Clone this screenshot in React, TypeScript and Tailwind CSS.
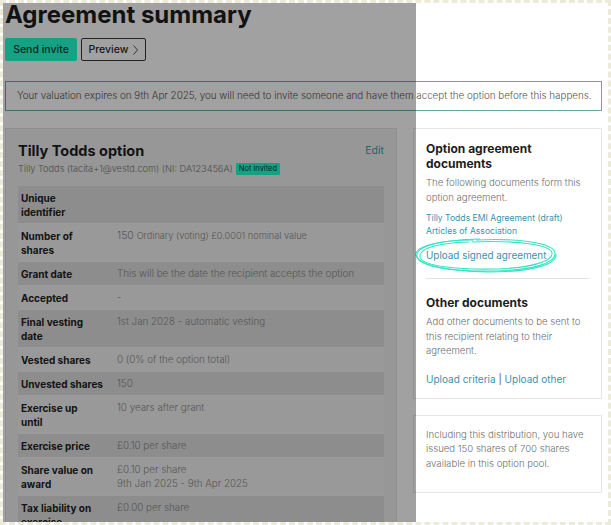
import React from "react";

const rows: { label: string[]; value: React.ReactNode; shaded: boolean }[] = [
  { label: ["Unique", "identifier"], value: "", shaded: true },
  {
    label: ["Number of", "shares"],
    value: (
      <>
        <span className="text-[10.5px]">150</span> <span className="text-[9.2px]">Ordinary (voting) £0.0001 nominal value</span>
      </>
    ),
    shaded: false,
  },
  { label: ["Grant date"], value: "This will be the date the recipient accepts the option", shaded: true },
  { label: ["Accepted"], value: "-", shaded: false },
  { label: ["Final vesting", "date"], value: "1st Jan 2028 - automatic vesting", shaded: true },
  { label: ["Vested shares"], value: "0 (0% of the option total)", shaded: false },
  { label: ["Unvested shares"], value: "150", shaded: true },
  { label: ["Exercise up", "until"], value: "10 years after grant", shaded: false },
  { label: ["Exercise price"], value: "£0.10 per share", shaded: true },
  {
    label: ["Share value on", "award"],
    value: (
      <>
        £0.10 per share
        <br />
        9th Jan 2025 - 9th Apr 2025
      </>
    ),
    shaded: false,
  },
  { label: ["Tax liability on", "exercise"], value: "£0.00 per share", shaded: true },
];

// hand drawn highlight round the upload link
function Scribble() {
  return (
    <svg
      className="absolute left-[-12px] top-[-11px] w-[144px] h-[37px] pointer-events-none"
      viewBox="0 0 144 37"
      fill="none"
      stroke="#35e3c6"
      strokeWidth="1.1"
    >
      <path d="M60 3 C 20 3, 2 11, 3 19 C 4 30, 40 35, 80 34 C 120 33, 142 26, 141 16 C 140 6, 105 1, 62 3" />
      <path d="M55 5 C 18 6, 5 13, 6 20 C 8 29, 44 33, 82 32 C 118 31, 139 24, 138 16 C 137 8, 104 3, 58 5" />
      <path d="M66 2 C 26 3, 1 9, 2 18 C 3 27, 30 34, 74 35 C 116 35, 143 28, 142 17" />
    </svg>
  );
}

export default function App() {
  return (
    <div className="relative w-[611px] h-[525px] overflow-hidden bg-white border-[3px] border-dashed border-[#ecead9] font-['Inter','Liberation_Sans',sans-serif] text-[#333]">
      <div className="pl-[2px] pr-[6px]">
        <h1 className="text-[24px] font-bold leading-[30px] -mt-[3px] text-[#1d1d1d]">Agreement summary</h1>

        <div className="flex gap-1 mt-[8px]">
          <button className="h-[23px] w-[72px] bg-[#22ffd2] text-[#173b33] text-[10.5px] font-medium rounded-[2px]">Send invite</button>
          <button className="h-[23px] w-[65px] border border-[#3a3a3a] text-[#2a2a2a] text-[10.5px] font-medium rounded-[2px] flex items-center justify-center gap-[5px]">
            Preview
            <svg width="5" height="10" viewBox="0 0 5 10" fill="none" stroke="#444" strokeWidth="0.9">
              <path d="M0.5 0.5 L4.5 5 L0.5 9.5" />
            </svg>
          </button>
        </div>

        <div className="mt-[20px] h-[30px] border border-[#6aa8a5] flex items-center px-[11px] text-[9.8px] font-light text-[#555] whitespace-nowrap">
          Your valuation expires on 9th Apr 2025, you will need to invite someone and have them accept the option before this happens.
        </div>

        <div className="flex gap-4 mt-[17px] items-start">
          <div className="w-[392px] shrink-0 bg-[#f0f0f0] border border-[#e2e2e2] px-[12px] pt-[12px] pb-4">
            <div className="flex justify-between items-start">
              <h2 className="text-[14.5px] font-bold text-[#1d1d1d] leading-[20px]">Tilly Todds option</h2>
              <span className="text-[10.5px] text-[#459aa9] mt-[2px]">Edit</span>
            </div>
            <div className="flex items-center gap-[3px] text-[9.2px] font-light text-[#777] leading-[14px] mt-[1px]">
              <span>Tilly Todds (tacita+1@vestd.com) (NI: DA123456A)</span>
              <span className="bg-[#22ffd2] text-[#0e3b30] text-[7.5px] font-normal px-[3px] leading-[12px] rounded-[1px]">Not invited</span>
            </div>
            <div className="mt-[10px] w-[366px]">
              {rows.map((r) => (
                <div
                  key={r.label.join(" ")}
                  className={`flex border-b border-[#f6f6f6] leading-[14px] pt-[5px] pb-[4px] ${r.shaded ? "bg-[#e0e0e0]" : "bg-[#f3f3f3]"}`}
                >
                  <div className="w-[99px] shrink-0 pl-[3px] text-[10px] font-bold text-[#222]">
                    {r.label.map((l) => (
                      <div key={l} className="whitespace-nowrap">{l}</div>
                    ))}
                  </div>
                  <div className="text-[9.8px] font-light text-[#8a8a8a]">{r.value}</div>
                </div>
              ))}
            </div>
          </div>

          <div className="w-[189px] flex flex-col gap-4">
            <div className="bg-white border border-[#e6e6e6] px-[12px] pt-[12px] pb-[11px]">
              <h3 className="text-[12px] font-bold text-[#1d1d1d] leading-[15px]">Option agreement documents</h3>
              <p className="text-[9.6px] font-light text-[#6f6f6f] leading-[15px] mt-[4px]">The following documents form this option agreement.</p>
              <div className="mt-[7px] text-[8.6px] text-[#3a93ad] leading-[13px]">
                <div>Tilly Todds EMI Agreement (draft)</div>
                <div>Articles of Association</div>
              </div>
              <div className="relative mt-[10px] text-[9.9px] text-[#3a93ad] leading-[15px]">
                <Scribble />
                <span className="relative">Upload signed agreement</span>
              </div>
              <div className="border-t border-[#e2e2e2] mt-[15px] pt-[16px]">
                <h3 className="text-[12px] font-bold text-[#1d1d1d] leading-[15px]">Other documents</h3>
                <p className="text-[9.6px] font-light text-[#6f6f6f] leading-[14.5px] mt-[5px]">
                  Add other documents to be sent to this recipient relating to their agreement.
                </p>
                <div className="mt-[13px] text-[10px] text-[#3a93ad] leading-[15px]">
                  Upload criteria <span className="text-[#555]">|</span> Upload other
                </div>
              </div>
            </div>
            <div className="bg-white border border-[#e6e6e6] px-[12px] pt-[12px] pb-[21px]">
              <p className="text-[9.6px] font-light text-[#6f6f6f] leading-[14.5px]">
                Including this distribution, you have issued 150 shares of 700 shares available in this option pool.
              </p>
            </div>
          </div>
        </div>
      </div>

      {/* dimmed area of the tour highlight */}
      <div className="absolute top-[-3px] left-[-3px] bottom-[-3px] w-[416px] bg-black/37 pointer-events-none" />
    </div>
  );
}
